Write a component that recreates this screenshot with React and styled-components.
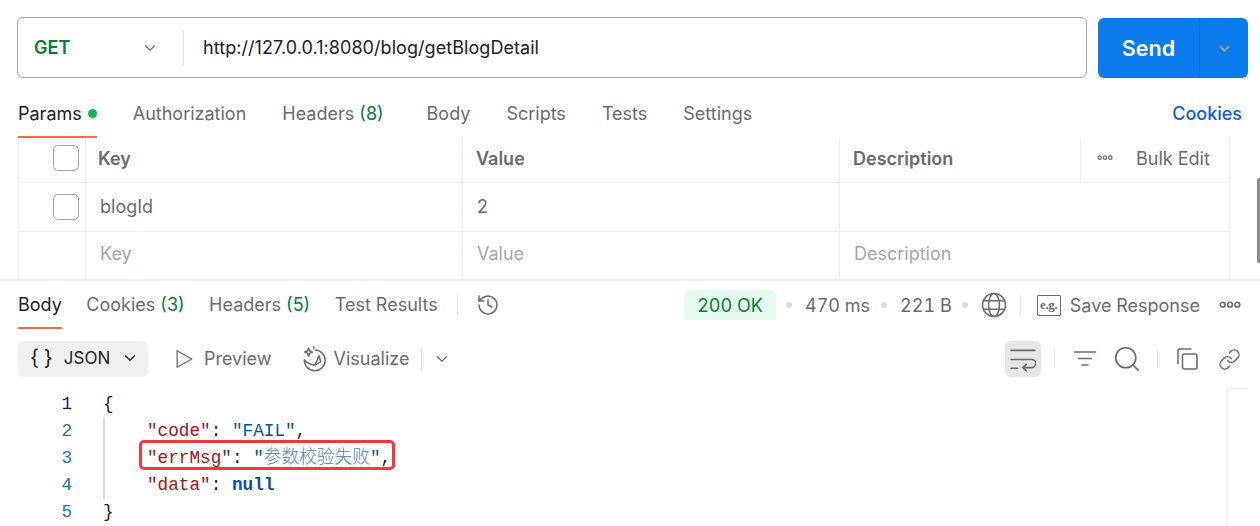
import React from "react"
import styled, { createGlobalStyle } from "styled-components"
import { ChevronDown, History, Search, Link } from "lucide-react"

const GlobalStyle = createGlobalStyle`
  html, body {
    margin: 0;
    padding: 0;
    background: #fff;
  }
  * {
    box-sizing: border-box;
  }
`

const Page = styled.div`
  position: relative;
  width: 1260px;
  height: 526px;
  overflow: hidden;
  background: #fff;
  color: #6b6b6b;
  font-family: Inter, "Noto Sans", sans-serif;
  font-size: 18px;
  display: flex;
  flex-direction: column;
  > * {
    flex-shrink: 0;
  }
`

const RequestBar = styled.div`
  display: flex;
  align-items: flex-start;
  gap: 11px;
  padding: 17px 12px 0 17px;
`

const UrlBox = styled.div`
  flex: 1;
  height: 61px;
  display: flex;
  align-items: center;
  border: 1px solid #a6a6a6;
  border-radius: 6px;
`

const Method = styled.div`
  width: 166px;
  height: 36px;
  padding: 0 24px 0 16px;
  display: flex;
  align-items: center;
  justify-content: space-between;
  border-right: 1px solid #e4e4e4;
  color: #007f31;
  font-size: 18px;
  font-weight: 600;
  svg {
    color: #6b6b6b;
  }
`

const UrlText = styled.div`
  padding-left: 19px;
  color: #212121;
  font-size: 18px;
  letter-spacing: 0.06px;
`

const SendButton = styled.div`
  width: 150px;
  height: 60px;
  margin-top: 1px;
  display: flex;
  align-items: center;
  background: #097bed;
  border-radius: 6px;
  color: #fff;
`

const SendLabel = styled.div`
  width: 102px;
  height: 100%;
  padding-bottom: 1px;
  display: flex;
  align-items: center;
  justify-content: center;
  border-right: 1px solid #0a6ccf;
  font-size: 21.5px;
  font-weight: 600;
`

const SendMore = styled.div`
  flex: 1;
  display: flex;
  justify-content: center;
`

const TabRow = styled.div`
  display: flex;
  align-items: flex-start;
  gap: 36px;
  height: 60px;
  padding: 0 18px;
`

const Tab = styled.div`
  height: 100%;
  display: flex;
  align-items: center;
  gap: 6px;
  white-space: pre;
  color: ${(p) => (p.$active ? "#212121" : "#6b6b6b")};
  border-bottom: 2px solid ${(p) => (p.$active ? "#ff6c37" : "transparent")};
  padding-top: ${(p) => p.$top || 0}px;
  margin-right: ${(p) => p.$after || 0}px;
`

const Count = styled.span`
  color: #007f31;
`

const GreenDot = styled.span`
  width: 9px;
  height: 9px;
  border-radius: 50%;
  background: #0cbb52;
`

const CookiesLink = styled.div`
  margin-left: auto;
  height: 100%;
  padding-top: 11px;
  display: flex;
  align-items: center;
  color: #0a5fd0;
  font-weight: 500;
`

const ParamsSection = styled.div`
  padding-left: 18px;
  border-bottom: 2px solid #ededed;
`

const ParamsTable = styled.div`
  display: grid;
  grid-template-columns: 67px 377px 377px 241px 150px;
  grid-template-rows: 45px 49px 47px;
  width: 1212px;
`

const Cell = styled.div`
  grid-column: span ${(p) => p.$span || 1};
  display: flex;
  align-items: center;
  padding-left: ${(p) => p.$pad ?? 14}px;
  padding-bottom: ${(p) => p.$lift || 0}px;
  border-left: 1px solid #ededed;
  border-right: ${(p) => (p.$last ? "1px solid #ededed" : "none")};
  border-bottom: ${(p) => (p.$noLine ? "none" : "1px solid #ededed")};
  font-weight: ${(p) => (p.$head ? 600 : 400)};
  color: ${(p) => (p.$placeholder ? "#a6a6a6" : "#6b6b6b")};
`

const CheckBox = styled.div`
  width: 26px;
  height: 26px;
  border: 1px solid #a6a6a6;
  border-radius: 5px;
`

const BulkEdit = styled.div`
  display: flex;
  align-items: center;
  gap: 23px;
`

const ResizeHandle = styled.div`
  position: absolute;
  top: 178px;
  right: 0;
  width: 3px;
  height: 85px;
  background: #8c8c8c;
  border-radius: 2px 0 0 2px;
`

const ResponseTabs = styled.div`
  display: flex;
  align-items: flex-start;
  height: 48px;
  padding: 0 19px 0 18px;
`

const TabGroup = styled.div`
  display: flex;
  gap: 24.5px;
  height: 100%;
`

const Divider = styled.span`
  display: inline-block;
  flex: none;
  width: 1px;
  height: ${(p) => p.$h || 20}px;
  background: #e2e2e2;
  margin: 0 ${(p) => p.$right ?? 16}px 0 ${(p) => p.$left ?? 16}px;
`

const InfoGroup = styled.div`
  height: 48px;
  display: flex;
  align-items: center;
`

const StatusGroup = styled(InfoGroup)`
  margin-left: auto;
  font-variant-numeric: tabular-nums;
`

const StatusPill = styled.div`
  width: 92px;
  height: 30px;
  display: flex;
  align-items: center;
  justify-content: center;
  background: #e5fbee;
  border-radius: 5px;
  color: #007f31;
`

const MetaDot = styled.span`
  flex: none;
  width: 6px;
  height: 6px;
  border-radius: 50%;
  background: #dcdcdc;
  margin: 0 13px 0 ${(p) => p.$left}px;
`

const ExampleIcon = styled.span`
  width: 24px;
  height: 21px;
  display: flex;
  align-items: center;
  justify-content: center;
  border: 1.5px solid #6b6b6b;
  border-radius: 1px;
  margin-right: 9px;
  font-family: "Liberation Serif", serif;
  font-size: 13px;
  font-weight: 700;
  letter-spacing: -0.3px;
`

const SaveLabel = styled.span`
  margin-right: 19px;
`

const Toolbar = styled.div`
  display: flex;
  align-items: center;
  height: 36px;
  margin-top: 12px;
  padding: 0 19px 0 18px;
`

const FormatSelect = styled.div`
  width: 130px;
  height: 36px;
  padding: 0 0 2px 12px;
  display: flex;
  align-items: center;
  background: #f0f0f0;
  border-radius: 6px;
  color: #212121;
  font-size: 17px;
  svg {
    margin-left: 11px;
  }
`

const Braces = styled.span`
  font-size: 21px;
  margin-right: 11px;
  margin-top: -2px;
  word-spacing: -1px;
`

const ViewOption = styled.div`
  display: flex;
  align-items: center;
  gap: ${(p) => p.$gap}px;
  margin-left: ${(p) => p.$left}px;
  padding-bottom: 1px;
`

const ToolGroup = styled.div`
  margin-left: auto;
  display: flex;
  align-items: center;
`

const WrapButton = styled.div`
  width: 36px;
  height: 36px;
  display: flex;
  align-items: center;
  justify-content: center;
  background: #e6e6e6;
  border-radius: 6px;
`

const IconGap = styled.span`
  display: inline-flex;
  margin-right: ${(p) => p.$right || 0}px;
`

const Editor = styled.div`
  flex: 1;
  display: flex;
  margin-top: 14px;
  font-family: "Liberation Mono", "Noto Sans CJK SC", monospace;
  font-size: 17.7px;
  line-height: 27px;
`

const Gutter = styled.div`
  width: 72px;
  flex: none;
  text-align: right;
`

const LineNumber = styled.div`
  color: ${(p) => (p.$current ? "#0b216f" : "#237893")};
`

const CodeArea = styled.div`
  flex: 1;
  padding-left: 31px;
  color: #212121;
`

const IndentBlock = styled.div`
  border-left: 2px solid #d9d9d9;
  padding-left: 42px;
`

const Line = styled.div`
  position: relative;
  height: 27px;
  white-space: pre;
`

const Key = styled.span`
  color: #a31515;
`

const Str = styled.span`
  color: #0451a5;
`

const Cjk = styled.span`
  font-family: "Noto Sans CJK SC", sans-serif;
  font-size: 17.7px;
  font-weight: 300;
  line-height: 0;
  color: #4a7fb8;
`

const NullWord = styled.span`
  color: #0451a5;
  font-weight: 700;
`

const RedBox = styled.div`
  position: absolute;
  left: -8px;
  top: -5px;
  width: 256px;
  height: 30px;
  border: 3px solid #f5393b;
  border-radius: 5px;
`

const RightRail = styled.div`
  flex: none;
  width: 21px;
  margin-right: 12px;
  margin-top: -3px;
  border-left: 1px solid #ededed;
  border-top: 1px solid #ededed;
`

const Icon = ({ size = 24, children, color = "#6b6b6b", width = 1.5 }) => (
  <svg
    width={size}
    height={size}
    viewBox="0 0 24 24"
    fill="none"
    stroke={color}
    strokeWidth={width}
    strokeLinecap="round"
    strokeLinejoin="round"
  >
    {children}
  </svg>
)

const MoreDots = ({ width = 16 }) => (
  <svg width={width} height={width / 3} viewBox="0 0 24 8" fill="none" stroke="#6b6b6b" strokeWidth="1.8">
    <circle cx="4" cy="4" r="2.6" />
    <circle cx="12" cy="4" r="2.6" />
    <circle cx="20" cy="4" r="2.6" />
  </svg>
)

const GlobeIcon = () => (
  <Icon size={26} width={1.4}>
    <circle cx="12" cy="12" r="10.6" />
    <ellipse cx="12" cy="12" rx="5" ry="10.6" />
    <path d="M2.6 8h18.8M2.6 16h18.8" />
  </Icon>
)

const PlayIcon = () => (
  <Icon size={22} width={1.4}>
    <path d="M4.5 3 20.5 12 4.5 21Z" />
  </Icon>
)

const VisualizeIcon = () => (
  <Icon size={26} width={1.4}>
    <path d="M13 3.6a9.6 9.6 0 1 1-9.9 9.4" />
    <path d="M3.2 13c2.8 3 6.2 4.6 9.8 4.4" />
    <path d="M13 17.4 16.6 9l1.6 5.6Z" />
    <path d="M7 1.8 8 4.6l2.6 1-2.6 1-1 2.8-1-2.8-2.6-1 2.6-1Z" />
    <path d="M11.8.8v1.2" />
  </Icon>
)

const WrapIcon = () => (
  <Icon size={26} width={1.5}>
    <path d="M1 4h22" />
    <path d="M1 12.5h19a3 3 0 0 1 0 7.5h-8" />
    <path d="M15 17l-3 3 3 3" />
    <path d="M1 20.5h6" />
  </Icon>
)

const FilterIcon = () => (
  <Icon size={24} width={1.5}>
    <path d="M1.5 5h21M5.5 11.5h13M9 18h6" />
  </Icon>
)

const CopyIcon = () => (
  <Icon size={24} width={1.5}>
    <rect x="7.5" y="7" width="14.5" height="15" rx="2" />
    <path d="M3 16.5V4a2 2 0 0 1 2-2h11" />
  </Icon>
)

const App = () => {
  return (
    <Page>
      <GlobalStyle />
      <RequestBar>
        <UrlBox>
          <Method>
            GET
            <ChevronDown size={18} strokeWidth={1.5} />
          </Method>
          <UrlText>http://127.0.0.1:8080/blog/getBlogDetail</UrlText>
        </UrlBox>
        <SendButton>
          <SendLabel>Send</SendLabel>
          <SendMore>
            <ChevronDown size={17} strokeWidth={1.5} />
          </SendMore>
        </SendButton>
      </RequestBar>

      <TabRow>
        <Tab $active $top={13}>
          Params
          <GreenDot />
        </Tab>
        <Tab $top={13}>Authorization</Tab>
        <Tab $top={13} $after={7}>
          <span>
            Headers <Count>(8)</Count>
          </span>
        </Tab>
        <Tab $top={13}>Body</Tab>
        <Tab $top={13}>Scripts</Tab>
        <Tab $top={13}>Tests</Tab>
        <Tab $top={13}>Settings</Tab>
        <CookiesLink>Cookies</CookiesLink>
      </TabRow>

      <ParamsSection>
        <ParamsTable>
          <Cell $pad={34} $lift={4}>
            <CheckBox />
          </Cell>
          <Cell $head $pad={12} $lift={4}>Key</Cell>
          <Cell $head $pad={13} $lift={4}>Value</Cell>
          <Cell $head $pad={13} $lift={4}>Description</Cell>
          <Cell $last $pad={16} $lift={4}>
            <BulkEdit>
              <MoreDots />
              Bulk Edit
            </BulkEdit>
          </Cell>

          <Cell $pad={34}>
            <CheckBox />
          </Cell>
          <Cell $lift={2}>blogId</Cell>
          <Cell $lift={2}>2</Cell>
          <Cell $span={2} $last />

          <Cell $noLine />
          <Cell $noLine $placeholder $lift={4}>Key</Cell>
          <Cell $noLine $placeholder $lift={4}>Value</Cell>
          <Cell $noLine $placeholder $lift={4} $span={2} $last>Description</Cell>
        </ParamsTable>
      </ParamsSection>
      <ResizeHandle />

      <ResponseTabs>
        <TabGroup>
          <Tab $active $top={1}>Body</Tab>
          <Tab $top={1}>
            <span>
              Cookies <Count>(3)</Count>
            </span>
          </Tab>
          <Tab $top={1}>
            <span>
              Headers <Count>(5)</Count>
            </span>
          </Tab>
          <Tab $top={1}>Test Results</Tab>
        </TabGroup>
        <InfoGroup>
          <Divider $left={19} $right={18} />
          <History size={24} strokeWidth={1.5} />
        </InfoGroup>
        <StatusGroup>
          <StatusPill>200 OK</StatusPill>
          <MetaDot $left={10} />
          470 ms
          <MetaDot $left={11} />
          221 B
          <MetaDot $left={10} />
          <GlobeIcon />
          <Divider $left={13} $right={16} />
          <ExampleIcon>e.g.</ExampleIcon>
          <SaveLabel>Save Response</SaveLabel>
          <MoreDots width={22} />
        </StatusGroup>
      </ResponseTabs>

      <Toolbar>
        <FormatSelect>
          <Braces>{"{ }"}</Braces>
          JSON
          <ChevronDown size={18} strokeWidth={1.7} />
        </FormatSelect>
        <ViewOption $gap={9} $left={25}>
          <PlayIcon />
          Preview
        </ViewOption>
        <ViewOption $gap={7} $left={29}>
          <VisualizeIcon />
          Visualize
        </ViewOption>
        <Divider $h={24} $left={12} $right={11} />
        <ChevronDown size={18} strokeWidth={1.5} />
        <ToolGroup>
          <WrapButton>
            <WrapIcon />
          </WrapButton>
          <Divider $h={18} $left={13} $right={18} />
          <IconGap $right={15}>
            <FilterIcon />
          </IconGap>
          <Search size={30} strokeWidth={1.3} />
          <Divider $h={18} $left={15} $right={17} />
          <IconGap $right={19}>
            <CopyIcon />
          </IconGap>
          <Link size={23} strokeWidth={1.5} />
        </ToolGroup>
      </Toolbar>

      <Editor>
        <Gutter>
          <LineNumber $current>1</LineNumber>
          <LineNumber>2</LineNumber>
          <LineNumber>3</LineNumber>
          <LineNumber>4</LineNumber>
          <LineNumber>5</LineNumber>
        </Gutter>
        <CodeArea>
          <Line>{"{"}</Line>
          <IndentBlock>
            <Line>
              <Key>"code"</Key>: <Str>"FAIL"</Str>,
            </Line>
            <Line>
              <Key>"errMsg"</Key>: <Str>"</Str>
              <Cjk>参数校验失败</Cjk>
              <Str>"</Str>,
              <RedBox />
            </Line>
            <Line>
              <Key>"data"</Key>: <NullWord>null</NullWord>
            </Line>
          </IndentBlock>
          <Line>{"}"}</Line>
        </CodeArea>
        <RightRail />
      </Editor>
    </Page>
  )
}

export default App
